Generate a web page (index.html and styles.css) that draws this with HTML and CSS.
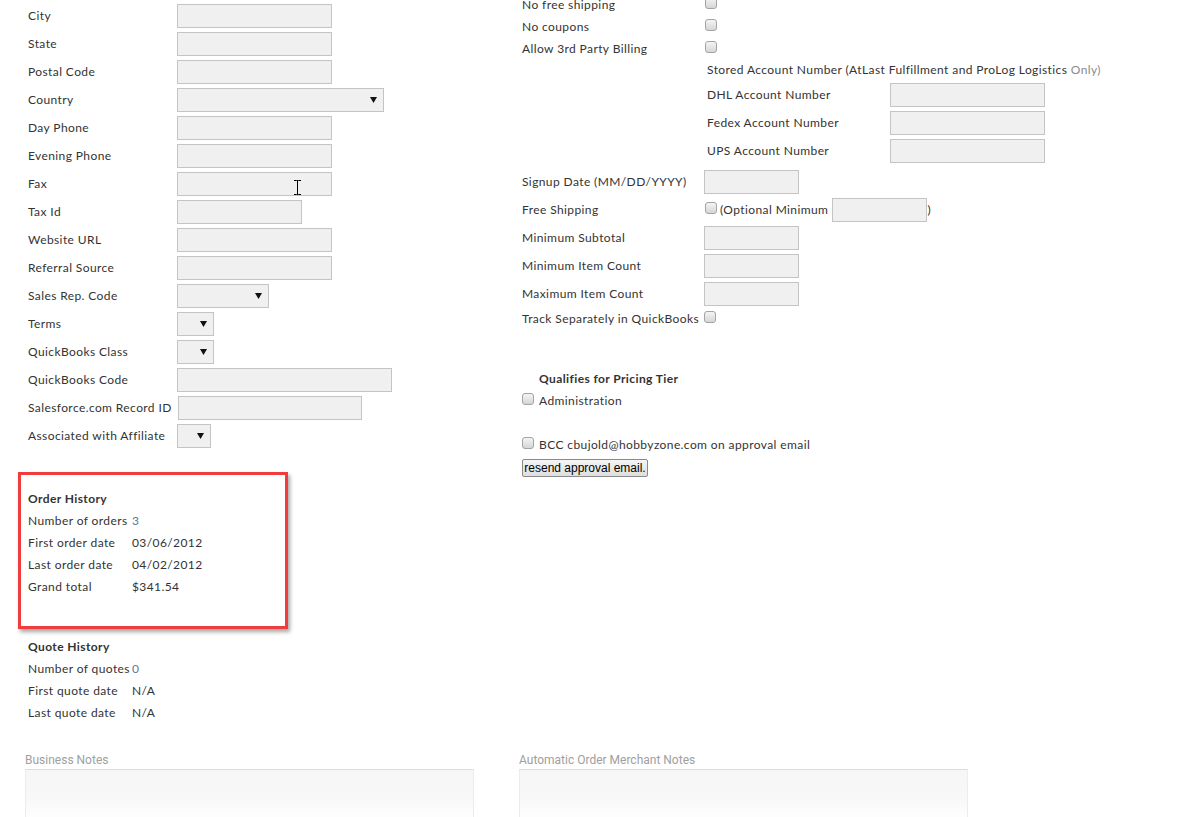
FILE: index.html
```html
<!DOCTYPE html>
<html>
<head>
<meta charset="utf-8">
<link rel="stylesheet" href="styles.css">
</head>
<body>
<div class="page">
  <div class="cols">
    <div class="left">
      <div class="form">
        <div class="row"><span class="lbl">City</span><span class="inp w155"></span></div>
        <div class="row"><span class="lbl">State</span><span class="inp w155"></span></div>
        <div class="row"><span class="lbl">Postal Code</span><span class="inp w155"></span></div>
        <div class="row"><span class="lbl">Country</span><span class="inp sel w207"><svg viewBox="0 0 7 6" class="arr"><path d="M0 0H7L3.5 6Z"/></svg></span></div>
        <div class="row"><span class="lbl">Day Phone</span><span class="inp w155"></span></div>
        <div class="row"><span class="lbl">Evening Phone</span><span class="inp w155"></span></div>
        <div class="row"><span class="lbl">Fax</span><span class="inp w155"></span></div>
        <div class="row"><span class="lbl">Tax Id</span><span class="inp w125"></span></div>
        <div class="row"><span class="lbl">Website URL</span><span class="inp w155"></span></div>
        <div class="row"><span class="lbl">Referral Source</span><span class="inp w155"></span></div>
        <div class="row"><span class="lbl">Sales Rep. Code</span><span class="inp sel w92"><svg viewBox="0 0 7 6" class="arr"><path d="M0 0H7L3.5 6Z"/></svg></span></div>
        <div class="row"><span class="lbl">Terms</span><span class="inp sel w37"><svg viewBox="0 0 7 6" class="arr"><path d="M0 0H7L3.5 6Z"/></svg></span></div>
        <div class="row"><span class="lbl">QuickBooks Class</span><span class="inp sel w37"><svg viewBox="0 0 7 6" class="arr"><path d="M0 0H7L3.5 6Z"/></svg></span></div>
        <div class="row"><span class="lbl">QuickBooks Code</span><span class="inp w215"></span></div>
        <div class="row"><span class="lbl wide">Salesforce.com Record ID</span><span class="inp w184"></span></div>
        <div class="row"><span class="lbl">Associated with Affiliate</span><span class="inp sel w34"><svg viewBox="0 0 7 6" class="arr"><path d="M0 0H7L3.5 6Z"/></svg></span></div>
      </div>

      <div class="history boxed">
        <div class="h">Order History</div>
        <div class="hrow"><span class="hl">Number of orders</span><span class="link">3</span></div>
        <div class="hrow"><span class="hl">First order date</span><span>03/06/2012</span></div>
        <div class="hrow"><span class="hl">Last order date</span><span>04/02/2012</span></div>
        <div class="hrow"><span class="hl">Grand total</span><span>$341.54</span></div>
      </div>

      <div class="history quote">
        <div class="h">Quote History</div>
        <div class="hrow"><span class="hl">Number of quotes</span><span class="link">0</span></div>
        <div class="hrow"><span class="hl">First quote date</span><span>N/A</span></div>
        <div class="hrow"><span class="hl">Last quote date</span><span>N/A</span></div>
      </div>
    </div>

    <div class="right">
      <div class="checks">
        <div class="crow"><span class="rlbl">No free shipping</span><span class="cb"></span></div>
        <div class="crow"><span class="rlbl">No coupons</span><span class="cb"></span></div>
        <div class="crow"><span class="rlbl">Allow 3rd Party Billing</span><span class="cb"></span></div>
      </div>
      <div class="stored">
        <div class="stitle">Stored Account Number (AtLast Fulfillment and ProLog Logistics <span class="muted">Only)</span></div>
        <div class="srow"><span class="slbl">DHL Account Number</span><span class="inp w155"></span></div>
        <div class="srow"><span class="slbl">Fedex Account Number</span><span class="inp w155"></span></div>
        <div class="srow"><span class="slbl">UPS Account Number</span><span class="inp w155"></span></div>
      </div>
      <div class="misc">
        <div class="mrow"><span class="mlbl">Signup Date (MM/DD/YYYY)</span><span class="inp w95"></span></div>
        <div class="mrow"><span class="mlbl">Free Shipping</span><span class="cb"></span><span class="opt">(Optional Minimum</span><span class="inp w95"></span><span class="paren">)</span></div>
        <div class="mrow"><span class="mlbl">Minimum Subtotal</span><span class="inp w95"></span></div>
        <div class="mrow"><span class="mlbl">Minimum Item Count</span><span class="inp w95"></span></div>
        <div class="mrow"><span class="mlbl">Maximum Item Count</span><span class="inp w95"></span></div>
        <div class="trow"><span class="tt">Track Separately in QuickBooks</span><span class="cb"></span></div>
      </div>
      <div class="tier">
        <div class="th">Qualifies for Pricing Tier</div>
        <div class="tline"><span class="cb"></span><span class="tt">Administration</span></div>
        <div class="tline bcc"><span class="cb"></span><span class="tt">BCC cbujold@hobbyzone.com on approval email</span></div>
        <button class="btn">resend approval email.</button>
      </div>
    </div>
  </div>

  <div class="notes">
    <div class="note">
      <div class="nl">Business Notes</div>
      <div class="ta"></div>
    </div>
    <div class="note">
      <div class="nl">Automatic Order Merchant Notes</div>
      <div class="ta"></div>
    </div>
  </div>

  <svg class="ibeam" viewBox="0 0 7 15" width="7" height="15"><path d="M0 0.5H2.5M4.5 0.5H7M3.5 1V14M0 14.5H2.5M4.5 14.5H7M2.5 0.5H4.5M2.5 14.5H4.5" stroke="#000" stroke-width="1" fill="none"/></svg>
</div>
</body>
</html>
```

FILE: styles.css
```css
html, body {
  margin: 0;
  padding: 0;
  background: #fff;
}
body {
  font-family: Lato, "Open Sans", sans-serif;
  font-size: 12px;
  letter-spacing: 0.4px;
  color: #333;
  overflow: hidden;
}
.page {
  position: relative;
  padding: 2px 0 0 28px;
  height: 815px;
  overflow: hidden;
}
.cols {
  display: flex;
  align-items: flex-start;
}
.left {
  width: 494px;
  flex: none;
}
.right {
  flex: 1;
  margin-top: -8px;
}

/* generic inputs */
.inp {
  display: inline-block;
  box-sizing: border-box;
  height: 24px;
  background: #f0f0f0;
  border: 1px solid #c4c4c4;
  position: relative;
  flex: none;
}
.w155 { width: 155px; }
.w207 { width: 207px; }
.w125 { width: 125px; }
.w92 { width: 92px; }
.w37 { width: 37px; }
.w34 { width: 34px; }
.w215 { width: 215px; }
.w184 { width: 184px; }
.w95 { width: 95px; }
.sel .arr {
  position: absolute;
  right: 6px;
  top: 8px;
  width: 7px;
  height: 6px;
  fill: #111;
}

/* left form */
.row {
  display: flex;
  align-items: center;
  height: 28px;
}
.lbl {
  width: 149px;
  flex: none;
  white-space: nowrap;
  margin-top: -2px;
}
.lbl.wide { width: 150px; }

/* history */
.history .h {
  font-weight: 700;
  height: 22px;
  line-height: 22px;
}
.hrow {
  display: flex;
  height: 22px;
  line-height: 22px;
}
.hl {
  width: 104px;
  flex: none;
  white-space: nowrap;
}
.link { color: #5b7896; }
.boxed {
  margin: 22px 0 0 -10px;
  width: 270px;
  box-sizing: border-box;
  border: 3px solid #f03c3c;
  padding: 13px 0 28px 7px;
  box-shadow: 2px 3px 4px rgba(0, 0, 0, 0.35);
}
.quote {
  margin-top: 7px;
}

/* right column */
.crow {
  display: flex;
  align-items: center;
  height: 22px;
}
.rlbl {
  width: 183px;
  flex: none;
  margin-top: -2px;
}
.cb {
  display: inline-block;
  box-sizing: border-box;
  width: 12px;
  height: 12px;
  border: 1px solid #a4a4a4;
  border-radius: 3px;
  background: linear-gradient(#f4f4f4, #d6d6d6);
  flex: none;
  margin-top: -5px;
}
.stored {
  margin-left: 185px;
}
.stitle {
  height: 20px;
  line-height: 19px;
  white-space: nowrap;
}
.muted { color: #8a8a8a; }
.srow {
  display: flex;
  align-items: center;
  height: 28px;
}
.stitle + .srow { margin-top: 1px; }
.slbl {
  width: 183px;
  flex: none;
  margin-top: -2px;
}
.misc {
  margin-top: 3px;
}
.mrow {
  display: flex;
  align-items: center;
  height: 28px;
}
.mlbl {
  width: 182px;
  flex: none;
  white-space: nowrap;
  margin-top: -2px;
}
.mrow .cb { margin: -4px 3px 0 1px; }
.opt { margin: -2px 4px 0 0; white-space: nowrap; }
.paren { margin-top: -2px; }
.trow {
  display: flex;
  align-items: center;
  height: 22px;
  white-space: nowrap;
}
.tt { margin-top: -2px; }
.trow .cb { margin: -5px 0 0 5px; }
.tier {
  margin-top: 40px;
}
.th {
  font-weight: 700;
  margin-left: 17px;
  height: 18px;
  line-height: 17px;
}
.tline {
  display: flex;
  align-items: center;
  height: 18px;
  margin-top: 4px;
}
.tline .cb { margin: -5px 5px 0 0; }
.tline.bcc { margin-top: 26px; }
.btn {
  display: block;
  margin-top: 5px;
  box-sizing: border-box;
  width: 126px;
  height: 18px;
  padding: 0;
  font-family: "Liberation Sans", Arial, sans-serif;
  font-size: 12px;
  letter-spacing: 0;
  color: #000;
  border: 1px solid #8a8a8a;
  border-radius: 2px;
  background: linear-gradient(#f5f5f5, #dedede);
  line-height: 15px;
}

/* notes */
.notes {
  display: flex;
  gap: 45px;
  margin: 28px 0 0 -3px;
}
.note { width: 449px; }
.nl {
  font-family: Roboto, "Open Sans", sans-serif;
  font-size: 12px;
  letter-spacing: 0;
  color: #a0a0a0;
  height: 16px;
  line-height: 16px;
}
.ta {
  margin-top: 1px;
  height: 50px;
  border: 1px solid #ececec;
  border-top-color: #dcdcdc;
  background: linear-gradient(#f6f6f6, #f8f8f8 60%, #fff);
}
.ibeam {
  position: absolute;
  left: 294px;
  top: 180px;
}
```
